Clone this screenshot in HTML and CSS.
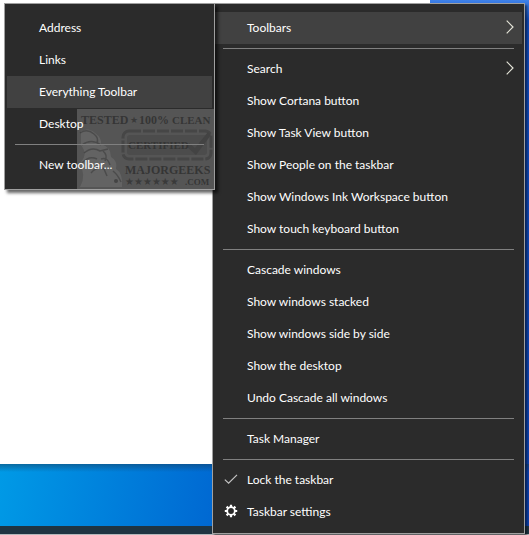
FILE: index.html
```html
<!DOCTYPE html>
<html lang="en">
  <head>
    <meta charset="UTF-8" />
    <meta name="viewport" content="width=device-width, initial-scale=1.0" />
    <title>Taskbar Menu</title>
    <link rel="stylesheet" href="styles.css">
  </head>
  <body>
    <!-- Desktop -->
    <main class="desktop">
      <div class="page"></div>
    </main>
    <footer class="taskbar"></footer>

    <!-- Taskbar context menu -->
    <div class="menu menu-main" role="menu" aria-label="Taskbar">
      <button class="menu-item active" role="menuitem">
        <span class="menu-label">Toolbars</span>
        <svg class="arrow" viewBox="0 0 8 14"><path d="M0.7 0.7 L7 7 L0.7 13.3" /></svg>
      </button>
      <hr class="separator" />
      <button class="menu-item" role="menuitem">
        <span class="menu-label">Search</span>
        <svg class="arrow" viewBox="0 0 8 14"><path d="M0.7 0.7 L7 7 L0.7 13.3" /></svg>
      </button>
      <button class="menu-item" role="menuitem">Show Cortana button</button>
      <button class="menu-item" role="menuitem">Show Task View button</button>
      <button class="menu-item" role="menuitem">Show People on the taskbar</button>
      <button class="menu-item" role="menuitem">Show Windows Ink Workspace button</button>
      <button class="menu-item" role="menuitem">Show touch keyboard button</button>
      <hr class="separator" />
      <button class="menu-item" role="menuitem">Cascade windows</button>
      <button class="menu-item" role="menuitem">Show windows stacked</button>
      <button class="menu-item" role="menuitem">Show windows side by side</button>
      <button class="menu-item" role="menuitem">Show the desktop</button>
      <button class="menu-item" role="menuitem">Undo Cascade all windows</button>
      <hr class="separator" />
      <button class="menu-item" role="menuitem">Task Manager</button>
      <hr class="separator" />
      <button class="menu-item with-icon" role="menuitem">
        <svg class="icon" viewBox="0 0 14 14"><path class="check" d="M0.8 7.6 L4.6 11.2 L13 2.8" /></svg>
        Lock the taskbar
      </button>
      <button class="menu-item with-icon" role="menuitem">
        <svg class="icon" viewBox="0 0 14 14">
          <circle class="gear" cx="7" cy="7" r="3.8" />
          <path class="teeth" d="M7 0.8V3 M7 11V13.2 M0.8 7H3 M11 7H13.2 M2.6 2.6L4.2 4.2 M9.8 9.8L11.4 11.4 M11.4 2.6L9.8 4.2 M4.2 9.8L2.6 11.4" />
        </svg>
        Taskbar settings
      </button>
    </div>

    <!-- Toolbars submenu -->
    <div class="menu menu-sub" role="menu" aria-label="Toolbars">
      <button class="menu-item" role="menuitem">Address</button>
      <button class="menu-item" role="menuitem">Links</button>
      <button class="menu-item active" role="menuitem">Everything Toolbar</button>
      <button class="menu-item" role="menuitem">Desktop</button>
      <hr class="separator" />
      <button class="menu-item" role="menuitem">New toolbar...</button>

      <!-- Watermark -->
      <svg class="watermark" viewBox="0 0 138 80">
        <rect class="wm-back" width="138" height="80" />
        <path class="wm-light" d="M4 22 Q12 18 18 24 Q25 29 24 35 Q34 38 34 48 Q41 52 39 60 Q46 64 45 78 H3 Q10 66 2 55 Q12 46 4 36 Z" />
        <path class="wm-line" d="M3 24 Q10 19 17 25 Q22 29 20 34 M5 36 Q14 29 24 36 M7 44 Q15 37 23 42 L31 40 M5 54 Q12 46 20 50 M24 50 Q31 48 33 56 M14 64 Q20 57 27 60 L30 67 M36 62 Q41 66 44 73 M26 42 Q31 46 28 52" />
        <circle class="wm-dot" cx="39" cy="72" r="2" />
        <rect class="wm-frame" x="46" y="22" width="88" height="28" rx="6" />
        <rect class="wm-inner" x="50" y="26" width="80" height="20" rx="3" />
        <path class="wm-check" d="M112 34 L118 39 L131 23 L134 26 L119 46 L110 38 Z" />
        <g class="wm-text">
          <text x="4" y="15" font-size="12">TESTED</text>
          <text x="62" y="15" font-size="12">100%</text>
          <text x="95" y="15" font-size="11">CLEAN</text>
          <text x="51" y="40" font-size="11">CERTIFIED</text>
          <text x="48" y="65" font-size="12">MAJORGEEKS</text>
          <text x="108" y="76" font-size="9">.COM</text>
        </g>
        <g class="wm-stars">
          <text x="53" y="14" font-size="9">★</text>
          <text x="48" y="76" font-size="10">★★★★★★</text>
        </g>
      </svg>
    </div>
  </body>
</html>
```
FILE: styles.css
```css
* {
  margin: 0;
  padding: 0;
  box-sizing: border-box;
}

body {
  min-height: 100vh;
  display: flex;
  flex-direction: column;
  position: relative;
  overflow: hidden;
  font-family: Lato, "Noto Sans", sans-serif;
  font-size: 12px;
}

/* Desktop */
.desktop {
  flex: 1;
  display: flex;
  padding: 0 99px 62px 0;
  background:
    linear-gradient(rgba(20, 60, 90, 0.5), transparent 8px) 0 100% / 100% 62px no-repeat,
    linear-gradient(100deg, #009ae6, #0068d2 220px, #0b3fa8 400px, #0b3fa8) 0 100% / 100% 62px no-repeat,
    linear-gradient(#3f82ea, #0f48b4 20px, #0b3fa8);
}

.page {
  flex: 1;
  background: #fff;
}

.taskbar {
  height: 9px;
  background: #1f3442;
  border-bottom: 1px solid #b4b8bb;
}

/* Menus */
.menu {
  position: absolute;
  top: 3px;
  display: flex;
  flex-direction: column;
  padding: 8px 2px;
  background: #2b2b2b;
  border: 1px solid #a0a0a0;
}

.menu-main {
  left: 212px;
  right: 4px;
  padding-bottom: 5px;
  box-shadow: 2px 2px 2px rgba(0, 0, 0, 0.5);
}

.menu-sub {
  left: 4px;
  width: 211px;
  z-index: 1;
  box-shadow: 3px 3px 3px rgba(0, 0, 0, 0.6);
}

.menu-item {
  display: flex;
  align-items: center;
  height: 32px;
  padding: 0 8px 2px 32px;
  border: none;
  background: none;
  color: #fff;
  font: inherit;
  text-align: left;
  white-space: nowrap;
}

.menu-item:hover,
.menu-item.active {
  background: #414141;
}

.menu-label {
  flex: 1;
}

.with-icon {
  gap: 9px;
  padding-left: 9px;
}

.separator {
  height: 1px;
  margin: 4px 8px;
  border: none;
  background: #808080;
}

/* Icons */
.arrow {
  width: 8px;
  height: 14px;
  fill: none;
  stroke: #e4e4d8;
  stroke-width: 1.2;
}

.icon {
  width: 14px;
  height: 14px;
  fill: none;
}

.check {
  stroke: #c4c4c4;
  stroke-width: 1.2;
}

.gear {
  stroke: #fff;
  stroke-width: 1.8;
}

.teeth {
  stroke: #fff;
  stroke-width: 2.2;
}

/* Watermark, behind the labels of the submenu */
.watermark {
  position: absolute;
  right: -1px;
  bottom: 0;
  z-index: -1;
  width: 138px;
  height: 80px;
  pointer-events: none;
}

.wm-back {
  fill: rgba(150, 150, 150, 0.4);
}

.wm-light {
  fill: rgba(150, 150, 150, 0.22);
}

.wm-line {
  fill: none;
  stroke: rgba(40, 40, 40, 0.4);
  stroke-width: 1.5;
}

.wm-dot {
  fill: #444;
}

.wm-frame {
  fill: none;
  stroke: #464646;
  stroke-width: 3;
  stroke-dasharray: 12 2;
}

.wm-inner {
  fill: #4c4c4c;
}

.wm-check {
  fill: #434343;
}

.wm-text {
  fill: #353535;
  font-family: "Liberation Serif", serif;
  font-weight: bold;
}

.wm-stars {
  fill: #3a3a3a;
  font-family: "DejaVu Sans", sans-serif;
}
```
